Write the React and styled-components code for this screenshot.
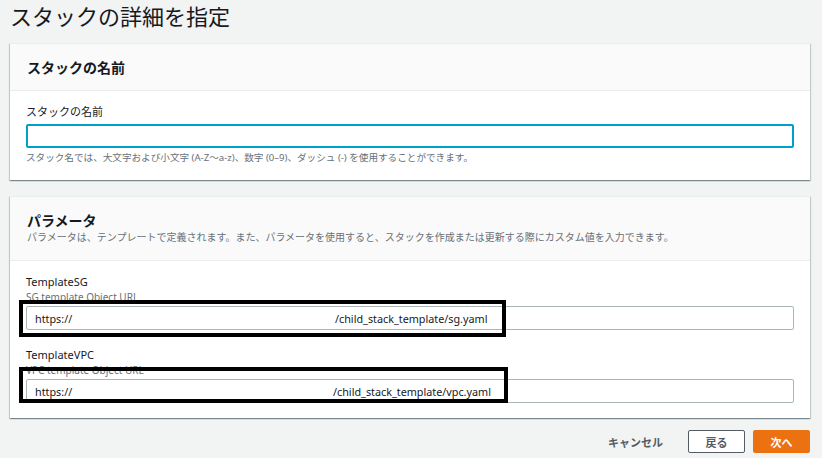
import React from "react";
import styled, { createGlobalStyle } from "styled-components";

const GlobalStyle = createGlobalStyle`
  html, body {
    margin: 0;
    padding: 0;
    background: #f2f3f3;
  }
  body {
    font-family: "Noto Sans", "Noto Sans CJK JP", sans-serif;
    color: #16191f;
  }
  * {
    box-sizing: border-box;
  }
`;

const Page = styled.div`
  width: 822px;
  height: 458px;
  padding: 0 12px 0 10px;
  overflow: hidden;
`;

const Title = styled.h1`
  margin: 0 0 13px;
  font-size: 22px;
  line-height: 30px;
  font-weight: 400;
  color: #16191f;
  font-family: "Noto Sans CJK JP", sans-serif;
`;

const Card = styled.section`
  background: #fff;
  margin-bottom: ${(p) => p.$gap || 0}px;
  box-shadow: 0 1px 1px 0 rgba(0, 28, 36, 0.3), 1px 1px 1px 0 rgba(0, 28, 36, 0.15),
    -1px 1px 1px 0 rgba(0, 28, 36, 0.15);
  border-top: 1px solid #eaeded;
`;

const CardHeader = styled.header`
  background: #fafafa;
  border-bottom: 1px solid #eaeded;
  padding: ${(p) => p.$pad};
  height: ${(p) => p.$height}px;
  display: flex;
  flex-direction: column;
  justify-content: ${(p) => (p.$center ? "center" : "flex-start")};
`;

const HeaderTitle = styled.h2`
  margin: 0;
  font-size: 14px;
  line-height: 20px;
  font-weight: 700;
  font-family: "Noto Sans CJK JP", sans-serif;
`;

const HeaderDesc = styled.p`
  margin: 0;
  font-size: 10px;
  line-height: 14px;
  color: #687078;
  font-family: "Noto Sans", "Noto Sans CJK JP", sans-serif;
`;

const CardBody = styled.div`
  padding: 13px 16px 15px;
`;

const Field = styled.div`
  & + & {
    margin-top: 17px;
  }
`;

const Label = styled.label`
  display: block;
  font-size: 11px;
  line-height: 16px;
  color: #16191f;
  font-family: "Noto Sans", "Noto Sans CJK JP", sans-serif;
`;

const Hint = styled.div`
  font-size: ${(p) => p.$size || 10}px;
  line-height: 14px;
  color: #687078;
  margin: ${(p) => p.$margin || "0"};
  font-family: "Noto Sans", "Noto Sans CJK JP", sans-serif;
`;

const TextInput = styled.input`
  display: block;
  width: 100%;
  height: 24px;
  margin-top: 4px;
  border: 2px solid #00a1c9;
  border-radius: 2px;
  background: #fff;
  outline: none;
  padding: 0 8px;
  font-size: 11px;
`;

const InputWrap = styled.div`
  position: relative;
  margin-top: 2px;
`;

const UrlBox = styled.div`
  display: flex;
  align-items: center;
  height: 24px;
  border: 1px solid #aab7b8;
  border-radius: 2px;
  background: #fff;
  padding: 0 8px;
  font-size: 10.8px;
  color: #16191f;
  white-space: nowrap;
  font-family: "Noto Sans", sans-serif;
`;

const UrlHead = styled.span`
  display: inline-block;
  width: 37px;
`;

const UrlTail = styled.span`
  margin-left: ${(p) => p.$offset}px;
`;

const Redaction = styled.div`
  position: absolute;
  pointer-events: none;
  top: ${(p) => p.$top}px;
  left: -7px;
  width: ${(p) => p.$width}px;
  height: ${(p) => p.$height}px;
  border: 4px solid #000;
`;

const Footer = styled.div`
  display: flex;
  justify-content: flex-end;
  align-items: center;
  padding-top: 12px;
  gap: 8px;
`;

const LinkButton = styled.button`
  background: none;
  border: none;
  padding: 0;
  margin-right: 17px;
  font-size: 11px;
  font-weight: 700;
  color: #545b64;
  font-family: "Noto Sans CJK JP", sans-serif;
`;

const Button = styled.button`
  width: 57px;
  height: 23px;
  border-radius: 2px;
  border: 1px solid ${(p) => (p.$primary ? "#ec7211" : "#545b64")};
  background: ${(p) => (p.$primary ? "#ec7211" : "#fff")};
  color: ${(p) => (p.$primary ? "#fff" : "#545b64")};
  font-size: 11px;
  font-weight: 700;
  padding: 0;
  font-family: "Noto Sans CJK JP", sans-serif;
`;

const params = [
  {
    name: "TemplateSG",
    desc: "SG template Object URL",
    tail: "/child_stack_template/sg.yaml",
    offset: 263,
    box: { top: -6, width: 487, height: 37 },
  },
  {
    name: "TemplateVPC",
    desc: "VPC template Object URL",
    tail: "/child_stack_template/vpc.yaml",
    offset: 261,
    box: { top: -12, width: 489, height: 36 },
  },
];

export default function App() {
  return (
    <>
      <GlobalStyle />
      <Page>
        <Title>スタックの詳細を指定</Title>

        <Card $gap={16}>
          <CardHeader $height={47} $pad="0 17px" $center>
            <HeaderTitle>スタックの名前</HeaderTitle>
          </CardHeader>
          <CardBody>
            <Label>スタックの名前</Label>
            <TextInput type="text" />
            <Hint $margin="3px 0 0" $size={9.6}>
              スタック名では、大文字および小文字 (A-Z〜a-z)、数字 (0–9)、ダッシュ (-) を使用することができます。
            </Hint>
          </CardBody>
        </Card>

        <Card>
          <CardHeader $height={64} $pad="13px 17px 0">
            <HeaderTitle>パラメータ</HeaderTitle>
            <HeaderDesc>
              パラメータは、テンプレートで定義されます。また、パラメータを使用すると、スタックを作成または更新する際にカスタム値を入力できます。
            </HeaderDesc>
          </CardHeader>
          <CardBody>
            {params.map((p) => (
              <Field key={p.name}>
                <Label>{p.name}</Label>
                <Hint>{p.desc}</Hint>
                <InputWrap>
                  <UrlBox>
                    <UrlHead>https://</UrlHead>
                    <UrlTail $offset={p.offset}>{p.tail}</UrlTail>
                  </UrlBox>
                  <Redaction $top={p.box.top} $width={p.box.width} $height={p.box.height} />
                </InputWrap>
              </Field>
            ))}
          </CardBody>
        </Card>

        <Footer>
          <LinkButton>キャンセル</LinkButton>
          <Button>戻る</Button>
          <Button $primary>次へ</Button>
        </Footer>
      </Page>
    </>
  );
}
